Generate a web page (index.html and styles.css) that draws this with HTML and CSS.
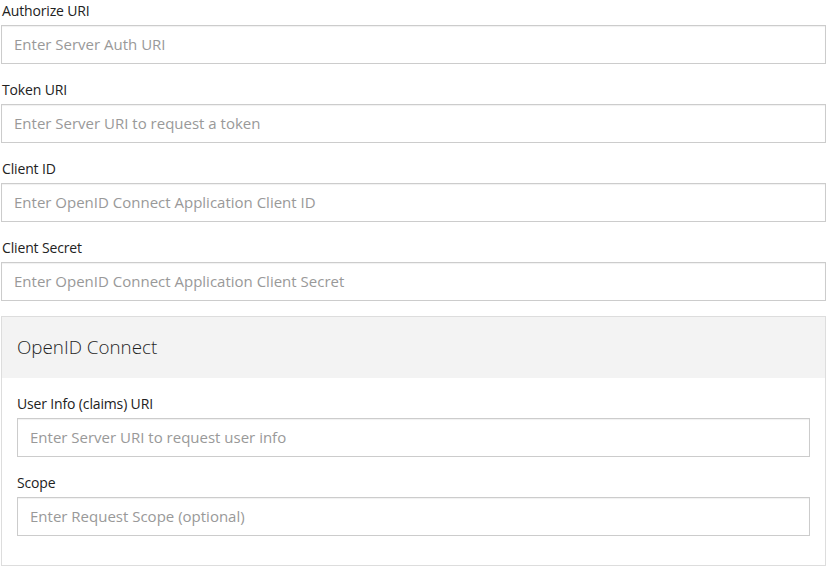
FILE: index.html
```html
<!DOCTYPE html>
<html>
<head>
<meta charset="utf-8">
<link rel="stylesheet" href="styles.css">
</head>
<body>
<div class="form">
  <div class="group">
    <label class="lbl">Authorize URI</label>
    <input class="field" type="text" placeholder="Enter Server Auth URI">
  </div>
  <div class="group">
    <label class="lbl">Token URI</label>
    <input class="field" type="text" placeholder="Enter Server URI to request a token">
  </div>
  <div class="group">
    <label class="lbl">Client ID</label>
    <input class="field" type="text" placeholder="Enter OpenID Connect Application Client ID">
  </div>
  <div class="group last">
    <label class="lbl">Client Secret</label>
    <input class="field" type="text" placeholder="Enter OpenID Connect Application Client Secret">
  </div>
  <div class="panel">
    <div class="panel-head">OpenID Connect</div>
    <div class="panel-body">
      <div class="group">
        <label class="lbl">User Info (claims) URI</label>
        <input class="field" type="text" placeholder="Enter Server URI to request user info">
      </div>
      <div class="group">
        <label class="lbl">Scope</label>
        <input class="field" type="text" placeholder="Enter Request Scope (optional)">
      </div>
    </div>
  </div>
</div>
</body>
</html>
```
FILE: styles.css
```css
* { box-sizing: border-box; }
html, body { margin: 0; padding: 0; background: #fff; }
body {
  font-family: "Open Sans", "Liberation Sans", sans-serif;
  color: #333;
}
.form {
  width: 825px;
  margin: 1px 0 0 1px;
}
.group {
  display: flex;
  flex-direction: column;
  margin-bottom: 16px;
}
.group.last { margin-bottom: 15px; }
.lbl {
  font-size: 14px;
  line-height: 20px;
  margin-bottom: 3px;
  padding-bottom: 1px;
  color: #222;
  padding-left: 1px;
  letter-spacing: -0.15px;
}
.field {
  height: 39px;
  width: 100%;
  border: 1px solid #ccc;
  box-shadow: inset 0 1px 1px rgba(0,0,0,0.06);
  padding: 0 12px 2px;
  font-family: "Open Sans", "Liberation Sans", sans-serif;
  font-size: 15px;
  color: #333;
  background: #fff;
  outline: none;
}
.field::placeholder { color: #999; }
.panel {
  border: 1px solid #ddd;
}
.panel-head {
  background: #f3f3f3;
  height: 61px;
  line-height: 60px;
  padding: 0 15px;
  font-size: 18.8px;
  font-weight: 300;
  color: #1f1f1f;
}
.panel-body {
  padding: 16px 15px 14px;
}
.panel-body .lbl { padding-left: 0; }
.panel-body .group:last-child { margin-bottom: 15px; }
```
